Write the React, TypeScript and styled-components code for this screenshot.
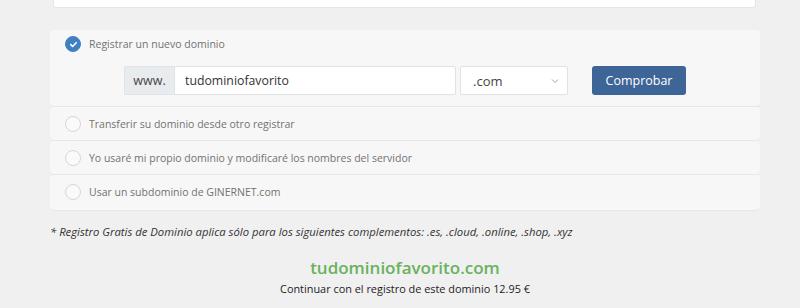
import React from 'react';
import styled, { createGlobalStyle } from 'styled-components';

const GlobalStyle = createGlobalStyle`
  body {
    margin: 0;
    background: #f0f0f0;
    font-family: "Open Sans", "Liberation Sans", sans-serif;
  }
`;

const Page = styled.div`
  width: 800px;
  height: 308px;
  overflow: hidden;
  display: flex;
  flex-direction: column;
`;

const TopCard = styled.div`
  margin: 0 44px 0 53px;
  height: 7px;
  background: #fff;
  border: 1px solid #e6e6e6;
  border-top: none;
  border-radius: 0 0 3px 3px;
`;

const Options = styled.div`
  margin: 22px 40px 0 50px;
  display: flex;
  flex-direction: column;
  gap: 1px;
`;

const OptionRow = styled.div<{ $open?: boolean }>`
  background: #f7f7f7;
  border-radius: 4px;
  box-shadow: 0 1px 1px rgba(0, 0, 0, 0.04);
  padding: ${(p) => (p.$open ? '0 15px 11px' : '3px 15px 2px')};

  &:last-child {
    padding-bottom: 4px;
  }
`;

const OptionHead = styled.label`
  height: 28px;
  display: flex;
  align-items: center;
  gap: 8px;
  font-size: 10.5px;
  color: #727272;
  cursor: pointer;
`;

const Radio = styled.span<{ $checked?: boolean }>`
  width: 16px;
  height: 16px;
  box-sizing: border-box;
  border-radius: 50%;
  flex-shrink: 0;
  display: flex;
  align-items: center;
  justify-content: center;
  background: ${(p) => (p.$checked ? '#3f80c3' : '#fafafa')};
  border: 1px solid ${(p) => (p.$checked ? '#3f80c3' : '#d6d6d6')};
`;

const SearchForm = styled.div`
  margin-top: 8px;
  display: flex;
  justify-content: center;
  align-items: stretch;
  height: 29px;
`;

const Addon = styled.span`
  width: 50px;
  box-sizing: border-box;
  display: flex;
  align-items: center;
  justify-content: center;
  background: #e9ecef;
  border: 1px solid #dfe2e6;
  border-right: none;
  border-radius: 2px 0 0 2px;
  font-size: 12.5px;
  color: #444;
`;

const DomainInput = styled.div`
  width: 282px;
  box-sizing: border-box;
  background: #fff;
  border: 1px solid #e2e2e2;
  border-radius: 0 2px 2px 0;
  display: flex;
  align-items: center;
  padding: 0 10px;
  font-size: 12.3px;
  color: #333;
`;

const TldSelect = styled.div`
  width: 108px;
  margin-left: 4px;
  box-sizing: border-box;
  background: #fff;
  border: 1px solid #e2e2e2;
  border-radius: 2px;
  display: flex;
  align-items: center;
  justify-content: space-between;
  padding: 0 8px 0 12px;
  font-size: 13px;
  color: #444;
`;

const CheckButton = styled.button`
  width: 94px;
  margin-left: 24px;
  border: none;
  border-radius: 3px;
  background: #3e6597;
  color: #fff;
  font-family: inherit;
  font-size: 12.5px;
  padding: 0;
`;

const Note = styled.p`
  margin: 14px 0 0 50px;
  font-size: 11.3px;
  font-style: italic;
  color: #333;
`;

const Result = styled.div`
  margin: 17px 40px 0 50px;
  display: flex;
  flex-direction: column;
  align-items: center;
  gap: 2px;
`;

const ResultDomain = styled.div`
  font-size: 17px;
  font-weight: 600;
  color: #6ab25d;
`;

const ResultText = styled.div`
  font-size: 10.9px;
  color: #222;
`;

const Check = () => (
  <svg width="9" height="9" viewBox="0 0 10 10" fill="none">
    <path d="M2 5.2l2 2 4-4.2" stroke="#fff" strokeWidth="1.8" strokeLinecap="round" strokeLinejoin="round" />
  </svg>
);

const Chevron = () => (
  <svg width="8" height="6" viewBox="0 0 8 6" fill="none">
    <path d="M1 1.5l3 3 3-3" stroke="#999" strokeWidth="0.9" />
  </svg>
);

const otherOptions = [
  'Transferir su dominio desde otro registrar',
  'Yo usaré mi propio dominio y modificaré los nombres del servidor',
  'Usar un subdominio de GINERNET.com',
];

export default function App() {
  return (
    <Page>
      <GlobalStyle />
      <TopCard />
      <Options>
        <OptionRow $open>
          <OptionHead>
            <Radio $checked>
              <Check />
            </Radio>
            Registrar un nuevo dominio
          </OptionHead>
          <SearchForm>
            <Addon>www.</Addon>
            <DomainInput>tudominiofavorito</DomainInput>
            <TldSelect>
              .com
              <Chevron />
            </TldSelect>
            <CheckButton>Comprobar</CheckButton>
          </SearchForm>
        </OptionRow>
        {otherOptions.map((label) => (
          <OptionRow key={label}>
            <OptionHead>
              <Radio />
              {label}
            </OptionHead>
          </OptionRow>
        ))}
      </Options>
      <Note>
        * Registro Gratis de Dominio aplica sólo para los siguientes complementos: .es, .cloud, .online, .shop, .xyz
      </Note>
      <Result>
        <ResultDomain>tudominiofavorito.com</ResultDomain>
        <ResultText>Continuar con el registro de este dominio 12.95 €</ResultText>
      </Result>
    </Page>
  );
}
